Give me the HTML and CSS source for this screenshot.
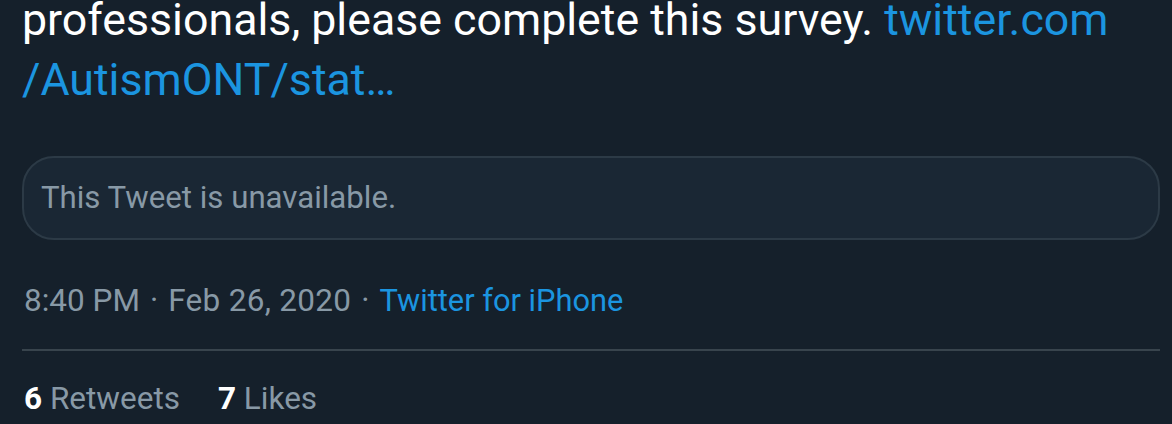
FILE: index.html
```html
<!DOCTYPE html>
<html lang="en">
<head>
<meta charset="utf-8">
<title>Tweet</title>
<link rel="stylesheet" href="styles.css">
</head>
<body>
<article class="tweet">
  <p class="tweet-text">professionals, please complete this survey. <a class="link" href="#">twitter.com<br>/AutismONT/stat…</a></p>
  <div class="quote-unavailable">This Tweet is unavailable.</div>
  <div class="meta">
    <span>8:40 PM</span><span class="dot">·</span><span class="date">Feb 26, 2020</span><span class="dot">·</span><a class="link source" href="#">Twitter for iPhone</a>
  </div>
  <div class="stats">
    <span class="stat"><b>6</b> Retweets</span>
    <span class="stat"><b>7</b> Likes</span>
  </div>
</article>
</body>
</html>
```
FILE: styles.css
```css
html, body {
  margin: 0;
  padding: 0;
  background: #15202b;
}
body {
  font-family: Roboto, "Liberation Sans", sans-serif;
  color: #ffffff;
  overflow: hidden;
}
.tweet {
  padding: 0 12px 0 22px;
}
.tweet-text {
  margin: -10px 0 0 0;
  font-size: 44.7px;
  line-height: 60px;
  color: #ffffff;
}
.link {
  color: #1b95e0;
  text-decoration: none;
}
.quote-unavailable {
  margin-top: 46px;
  border: 2px solid #2c3a46;
  background: #1a2734;
  border-radius: 32px;
  padding: 24px 17px;
  font-size: 31.2px;
  line-height: 32px;
  color: #8899a6;
}
.meta {
  margin-top: 41px;
  font-size: 31.5px;
  line-height: 40px;
  color: #8899a6;
  padding: 0 0 28px 2px;
  border-bottom: 2px solid #38444d;
}
.date {
  letter-spacing: 0.3px;
}
.source {
  font-size: 30.8px;
}
.dot {
  margin: 0 10px;
}
.stats {
  display: flex;
  gap: 38px;
  padding: 28px 0 0 2px;
  font-size: 31.5px;
  line-height: 40px;
  color: #8899a6;
}
.stats b {
  color: #ffffff;
  font-weight: 700;
}
```
